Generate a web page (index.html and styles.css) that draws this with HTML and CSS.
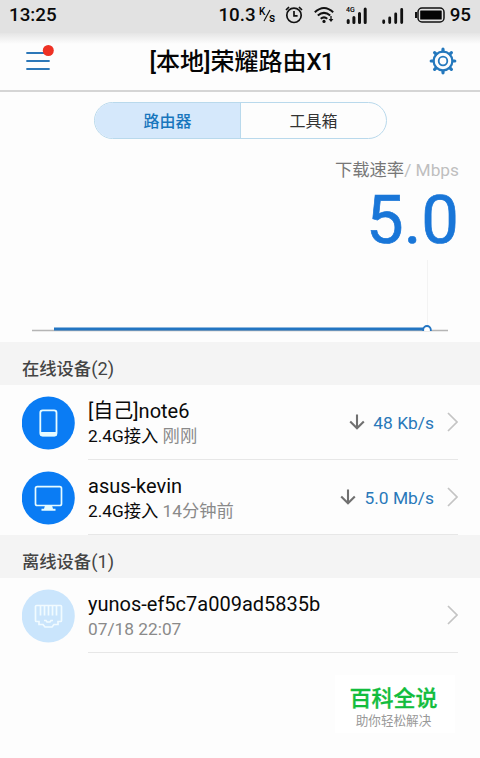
FILE: index.html
```
<!DOCTYPE html>
<html lang="zh-CN">
<head>
  <meta charset="UTF-8" />
  <meta name="viewport" content="width=device-width, initial-scale=1" />
  <title>荣耀路由X1</title>
  <link rel="stylesheet" href="styles.css">
</head>
<body>
  <div class="status-bar">
    <span class="clock">13:25</span>
    <span class="net-speed">10.3</span>
    <svg class="speed-unit" width="17" height="18" viewBox="0 0 17 18">
      <text x="0" y="9">K</text>
      <text x="10" y="16">s</text>
      <path d="M5 15L11 4" stroke="#111" stroke-width="1.2" />
    </svg>
    <svg class="alarm" width="18" height="18" viewBox="0 0 18 18" fill="none" stroke="#111" stroke-width="1.7">
      <circle cx="9" cy="9.3" r="7.2" />
      <path d="M9 5v4.8h3.6M1 4L4 1M14 1l3 3" />
    </svg>
    <svg class="wifi" width="20" height="18" viewBox="0 0 20 18" fill="none" stroke="#111" stroke-width="2">
      <path d="M.8 6.2Q10-2.2 19.2 6.2M3.8 9.6q6.2-5.5 12.4 0M6.7 12.8q3.3-2.8 6.6 0" />
      <circle cx="10" cy="15.4" r="1.6" fill="#111" stroke="none" />
      <path d="M17 10v4" stroke-width="1.3" />
      <path d="M14.6 13h4.8L17 16z" fill="#111" stroke="none" />
    </svg>
    <svg class="signal-4g" width="22" height="18" viewBox="0 0 22 18">
      <text x="0" y="6">4G</text>
      <path d="M2.2 14.5v2M7.9 11.500v5M13.5 7.5v9M19.2 3v13.5" stroke="#111" stroke-width="3" stroke-linecap="round" />
    </svg>
    <svg class="signal" width="22" height="18" viewBox="0 0 22 18">
      <path d="M1.7 15v1.500M7.7 12v4.500M13.7 8v8.500M19.7 3.500v13" stroke="#111" stroke-width="2.8" stroke-linecap="round" />
    </svg>
    <svg class="battery" width="30" height="18" viewBox="0 0 30 18">
      <rect x="3" y="2" width="26" height="14" rx="4" fill="none" stroke="#111" stroke-width="1.5" />
      <rect x="5.2" y="4.5" width="21.5" height="9" rx=".5" fill="#050505" />
      <path d="M1 6v6" stroke="#111" stroke-width="2" />
    </svg>
    <span class="battery-level">95</span>
  </div>

  <header class="header">
    <svg class="menu-icon" width="32" height="30" viewBox="0 0 32 30">
      <path d="M3 9h22M3 17h22M3 25h22" stroke="#2c77b8" stroke-width="1.8" stroke-linecap="round" />
      <circle cx="24.3" cy="6.5" r="5.5" fill="#ee3124" />
    </svg>
    <h1 class="title">[本地]荣耀路由<span class="model">X1</span></h1>
    <svg class="gear-icon" width="28" height="28" viewBox="-14 -14 28 28" fill="none" stroke="#2478bd">
      <circle r="9.4" stroke-width="2.2" />
      <circle r="4.3" stroke-width="1.8" />
      <path d="M0-10v-1.8M0 10v1.8M-10 0h-1.8M10 0h1.8M-7.1-7.1l-1.3-1.3M7.1-7.1l1.3-1.3M-7.1 7.1l-1.3 1.3M7.1 7.1l1.3 1.3" stroke-width="3.2" stroke-linecap="round" />
    </svg>
  </header>

  <nav class="tabs">
    <button class="tab active">路由器</button>
    <button class="tab">工具箱</button>
  </nav>

  <section class="rate">
    <div class="rate-label">下载速率<span class="rate-unit">/ Mbps</span></div>
    <div class="rate-value">5.0</div>
    <svg class="rate-chart" width="480" height="80" viewBox="0 0 480 80">
      <path d="M427.5 0v66" stroke="#f3f3f3" />
      <path d="M32 70.5h416" stroke="#b5b5b5" stroke-width="1.5" />
      <path d="M54 69h370" stroke="#2375c2" stroke-width="3.2" />
      <path d="M423.2 71v-1.2a3.8 3.8 0 0 1 7.600 0V71" fill="#fff" stroke="#2375c2" stroke-width="1.8" />
    </svg>
  </section>

  <h2 class="group-title">在线设备<span class="count">(2)</span></h2>
  <ul class="device-list">
    <li class="device">
      <svg class="device-icon" width="54" height="54" viewBox="0 0 54 54">
        <circle cx="26.3" cy="27" r="26.5" fill="#0a7cf4" />
        <rect x="18.300" y="14.3" width="16.2" height="25" rx="2.4" fill="none" stroke="#e6fbff" stroke-width="1.8" />
        <path d="M18 36h17v2a2.5 2.5 0 0 1-2.500 2.5H20.500a2.5 2.5 0 0 1-2.500-2.500z" fill="#e6fbff" />
      </svg>
      <div class="device-body">
        <div class="device-info">
          <div class="device-name">[自己]note6</div>
          <div class="device-meta">2.4G接入 <span class="time">刚刚</span></div>
        </div>
        <svg class="arrow-down" width="16" height="16" viewBox="0 0 16 16"><path d="M8 .5v14M1.2 7.5L8 14.3l6.8-6.8" /></svg>
        <span class="speed">48 Kb/s</span>
        <svg class="chevron" width="11" height="20" viewBox="0 0 11 20"><path d="M1 1l9 9-9 9" /></svg>
      </div>
    </li>
    <li class="device">
      <svg class="device-icon" width="54" height="54" viewBox="0 0 54 54">
        <circle cx="26.3" cy="27" r="26.5" fill="#0a7cf4" />
        <rect x="13.5" y="15.7" width="26" height="18.8" rx="1.8" fill="none" stroke="#e6fbff" stroke-width="1.7" />
        <path d="M23 34.500h7l1 3.3h2.500v2h-14v-2H22z" fill="#e6fbff" />
      </svg>
      <div class="device-body">
        <div class="device-info">
          <div class="device-name">asus-kevin</div>
          <div class="device-meta">2.4G接入 <span class="time">14分钟前</span></div>
        </div>
        <svg class="arrow-down" width="16" height="16" viewBox="0 0 16 16"><path d="M8 .5v14M1.2 7.5L8 14.3l6.8-6.8" /></svg>
        <span class="speed">5.0 Mb/s</span>
        <svg class="chevron" width="11" height="20" viewBox="0 0 11 20"><path d="M1 1l9 9-9 9" /></svg>
      </div>
    </li>
  </ul>

  <h2 class="group-title">离线设备<span class="count">(1)</span></h2>
  <ul class="device-list">
    <li class="device">
      <svg class="device-icon" width="54" height="54" viewBox="0 0 54 54">
        <circle cx="26.3" cy="27" r="26.5" fill="#cae5fc" />
        <g fill="none" stroke="#f1fbff" stroke-width="1.7">
          <path d="M14.500 16.5h24a1 1 0 0 1 1 1v14a1 1 0 0 1-1 1H36v3h-4L30 38h-7l-2-2.500h-4v-3h-2.500a1 1 0 0 1-1-1v-14a1 1 0 0 1 1-1z" />
          <path d="M18.500 17v9.500M22.500 17v9.500M26.500 17v9.500M30.500 17v9.500M34.500 17v9.500M22 31.500h2l1 1.500h3l1-1.500h2" stroke-width="1.7" />
        </g>
      </svg>
      <div class="device-body">
        <div class="device-info">
          <div class="device-name">yunos-ef5c7a009ad5835b</div>
          <div class="device-meta"><span class="time">07/18 22:07</span></div>
        </div>
        <svg class="chevron" width="11" height="20" viewBox="0 0 11 20"><path d="M1 1l9 9-9 9" /></svg>
      </div>
    </li>
  </ul>

  <footer class="brand">
    <div class="brand-name">百科全说</div>
    <div class="brand-slogan">助你轻松解决</div>
  </footer>
</body>
</html>
```

FILE: styles.css
```
* {
  box-sizing: border-box;
}

body {
  margin: 0;
  height: 758px;
  overflow: hidden;
  display: flex;
  flex-direction: column;
  background: #fdfdfd;
  color: #0a0a0a;
  font-family: Roboto, "Noto Sans CJK SC", sans-serif;
}

svg {
  display: block;
  flex: none;
}

.status-bar {
  height: 33px;
  flex: none;
  display: flex;
  align-items: center;
  padding: 0 9px 3px;
  background: #e2e2e2;
  font-size: 18.8px;
  font-weight: 500;
}

.clock {
  flex: 1;
}

.speed-unit {
  margin-left: 3px;
  font-size: 10px;
}

.speed-unit text:last-of-type {
  font-size: 12px;
}

.alarm {
  margin-left: 9px;
}

.wifi {
  margin-left: 11px;
}

.signal-4g {
  margin-left: 12px;
  font-size: 7px;
}

.signal {
  margin-left: 14px;
}

.battery {
  margin-left: 11px;
}

.battery-level {
  margin-left: 5px;
}

.header {
  height: 59px;
  flex: none;
  display: flex;
  align-items: center;
  justify-content: space-between;
  padding: 0 23px 0 24px;
  background: linear-gradient(#e5e5e5, #fdfdfd 11px);
  border-bottom: 2px solid #d5d5d5;
}

.menu-icon {
  margin-top: -6px;
}

.gear-icon {
  margin-top: -1px;
}

.title {
  margin: 0 2px 0 0;
  font-size: 24px;
  font-weight: 500;
  line-height: 36px;
  color: #050505;
}

.model {
  letter-spacing: -0.8px;
}

.tabs {
  width: 293px;
  height: 37px;
  flex: none;
  display: flex;
  margin: 10px 0 0 94px;
  border: 1.5px solid #b9d9ec;
  border-radius: 19px;
  overflow: hidden;
}

.tab {
  flex: 1;
  padding: 0 0 2px;
  border: none;
  background: none;
  color: #333;
  font-family: inherit;
  font-size: 16px;
}

.tab.active {
  background: #d5e8fb;
  border-right: 1px solid #b9d9ec;
  color: #1976bd;
  font-weight: 500;
}

.rate {
  height: 203px;
  flex: none;
  padding-top: 18px;
  text-align: right;
}

.rate-label {
  padding-right: 21px;
  font-size: 17.3px;
  line-height: 27px;
  color: #777;
}

.rate-unit {
  color: #bfbfbf;
}

.rate-value {
  height: 76px;
  padding-right: 21px;
  font-size: 67px;
  line-height: 73px;
  color: #1976d8;
  -webkit-text-stroke: 0.7px #1976d8;
}

.group-title {
  height: 43px;
  flex: none;
  margin: 0;
  padding: 8px 22px 0;
  background: #f4f4f4;
  font-size: 17.3px;
  font-weight: 500;
  line-height: 38px;
  color: #444;
}

.count {
  font-size: 18.3px;
  font-weight: 400;
}

.device-list {
  margin: 0;
  padding: 0;
  list-style: none;
}

.device {
  height: 75px;
  display: flex;
  align-items: center;
  padding: 0 22px;
}

.device-body {
  flex: 1;
  height: 75px;
  display: flex;
  align-items: center;
  margin-left: 12px;
  border-bottom: 1px solid #e7e7e7;
}

.device-info {
  flex: 1;
  padding-top: 3px;
}

.device-name {
  font-size: 20px;
  line-height: 26px;
}

.device-meta {
  font-size: 17.3px;
  line-height: 25px;
}

.time {
  color: #8a8a8a;
}

.arrow-down {
  fill: none;
  stroke: #707070;
  stroke-width: 2.1;
}

.speed {
  margin-left: 8px;
  padding-top: 1px;
  font-size: 17.4px;
  color: #2878b9;
}

.chevron {
  margin-left: 13px;
  fill: none;
  stroke: #c4c4c4;
  stroke-width: 1.7;
}

.brand {
  width: 120px;
  height: 58px;
  margin: 22px 0 0 335px;
  padding: 9px 3px 0 0;
  background: #fff;
  text-align: center;
}

.brand-name {
  font-size: 22px;
  font-weight: 500;
  line-height: 30px;
  color: #12bd3d;
  -webkit-text-stroke: 0.3px #12bd3d;
}

.brand-slogan {
  font-size: 12.6px;
  line-height: 13px;
  color: #999;
}
```
